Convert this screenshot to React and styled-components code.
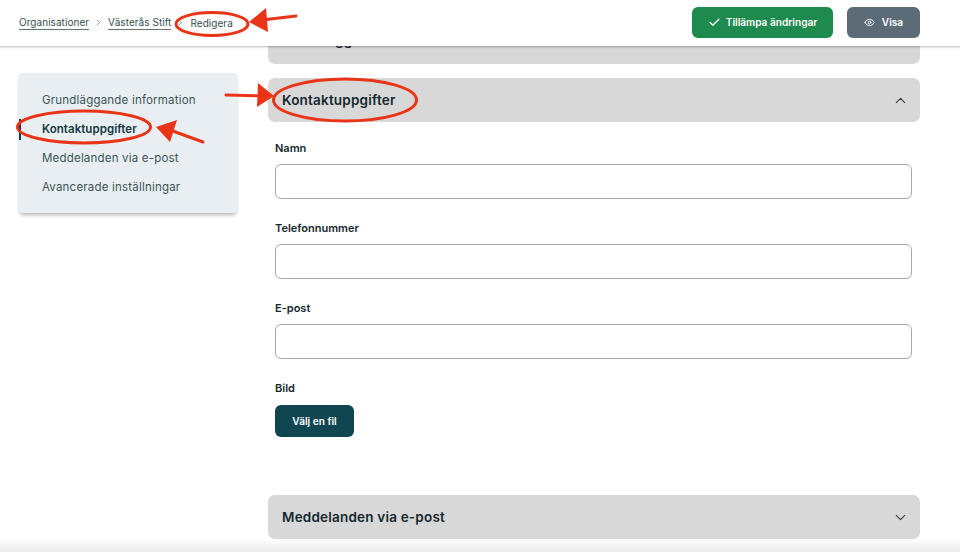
import React from 'react'
import styled, { createGlobalStyle } from 'styled-components'
import { Check, ChevronDown, ChevronRight, ChevronUp, Eye } from 'lucide-react'

const GlobalStyle = createGlobalStyle`
  html, body {
    margin: 0;
    background: #fff;
    font-family: Inter, "Open Sans", sans-serif;
  }
`

const Page = styled.div`
  position: relative;
  width: 960px;
  height: 552px;
  overflow: hidden;
  background: #fff;
`

const Header = styled.header`
  position: relative;
  z-index: 2;
  height: 46px;
  box-sizing: border-box;
  padding: 7px 40px 0 19px;
  display: flex;
  justify-content: space-between;
  align-items: flex-start;
  background: #fff;
  box-shadow: 0 1px 2px rgba(0, 0, 0, 0.3);
`

const Breadcrumbs = styled.nav`
  height: 31px;
  display: flex;
  align-items: center;
  gap: 5px;
  font-size: 10px;
  letter-spacing: 0.05px;
  color: #35504f;
`

const Crumb = styled.a`
  color: #35504f;
  text-decoration: none;
  border-bottom: 1px solid #5f7473;
  line-height: 13px;
`

const Actions = styled.div`
  display: flex;
  gap: 14px;
`

const ActionButton = styled.button`
  width: ${p => p.$width}px;
  height: 31px;
  padding: 0 0 1px;
  border: 0;
  border-radius: 6px;
  display: flex;
  align-items: center;
  justify-content: center;
  gap: ${p => p.$gap}px;
  font: 600 10.1px Inter, sans-serif;
  color: #fff;
  background: ${p => p.$color};
`

const Content = styled.div`
  display: grid;
  grid-template-columns: 218px 652px;
  column-gap: 31px;
  padding: 0 40px 0 19px;
`

const Sidebar = styled.aside`
  position: relative;
  margin-top: 27px;
  height: 140px;
  box-sizing: border-box;
  padding: 13px 0 0 23px;
  display: flex;
  flex-direction: column;
  background: #e9eef2;
  border-radius: 4px;
  box-shadow: 0 3px 4px -1px rgba(0, 0, 0, 0.3);
`

const SideItem = styled.a`
  position: relative;
  height: 29px;
  line-height: 29px;
  font-size: 11.5px;
  font-weight: ${p => (p.$active ? 600 : 400)};
  color: ${p => (p.$active ? '#123a40' : '#3a5556')};
  letter-spacing: ${p => (p.$active ? 0.05 : 0.2)}px;

  ${p => p.$active && `
    &::before {
      content: '';
      position: absolute;
      left: -23px;
      top: 4px;
      width: 2px;
      height: 21px;
      background: #123a40;
    }
  `}
`

const Main = styled.main`
  margin-top: -26px;
  display: flex;
  flex-direction: column;
`

const Bar = styled.div`
  height: 44px;
  margin-bottom: ${p => p.$mb || 0}px;
  box-sizing: border-box;
  padding: 0 11px 0 14px;
  display: flex;
  align-items: center;
  justify-content: space-between;
  background: #d8d8d8;
  border-radius: 7px;
`

const BarTitle = styled.h3`
  margin: ${p => (p.$peek ? '-5px 0 0' : '0')};
  font-size: 13.5px;
  font-weight: 600;
  letter-spacing: 0.2px;
  color: #14282e;
`

const Form = styled.form`
  height: 373px;
  box-sizing: border-box;
  padding: 19px 8px 0 7px;
  display: flex;
  flex-direction: column;
`

const Field = styled.div`
  height: 80px;
`

const Label = styled.label`
  display: block;
  height: 14px;
  line-height: 14px;
  margin-bottom: 9px;
  font-size: 11px;
  font-weight: 600;
  color: #14282e;
`

const Input = styled.input`
  display: block;
  width: 100%;
  height: 35px;
  box-sizing: border-box;
  border: 1px solid #a3a8a8;
  border-radius: 6px;
  background: #fff;
`

const FileButton = styled.button`
  display: block;
  width: 79px;
  height: 32px;
  margin-top: 10px;
  padding: 0;
  border: 0;
  border-radius: 6px;
  font: 600 10.1px Inter, sans-serif;
  color: #fff;
  background: #0f4650;
`

const BottomFade = styled.div`
  position: absolute;
  left: 0;
  right: 0;
  bottom: 0;
  height: 14px;
  background: linear-gradient(to bottom, rgba(235, 235, 235, 0), #ececec);
`

const Annotations = styled.svg`
  position: absolute;
  inset: 0;
  z-index: 3;
  pointer-events: none;
`

const red = '#ea3417'

const Mark = ({ cx, cy, rx, ry }) => (
  <ellipse cx={cx} cy={cy} rx={rx} ry={ry} fill="none" stroke={red} strokeWidth="3" />
)

const Arrow = ({ tail, tip, head }) => (
  <>
    <line x1={tail[0]} y1={tail[1]} x2={tip[0]} y2={tip[1]} stroke={red} strokeWidth="3" strokeLinecap="round" />
    <polygon points={head} fill={red} />
  </>
)

const App = () => {
  return (
    <Page>
      <GlobalStyle />
      <Header>
        <Breadcrumbs>
          <Crumb>Organisationer</Crumb>
          <ChevronRight size={9} color="#5f7473" />
          <Crumb>Västerås Stift</Crumb>
          <ChevronRight size={9} color="#5f7473" />
          <span>Redigera</span>
        </Breadcrumbs>
        <Actions>
          <ActionButton $width={141} $gap={5} $color="#1f8a4d">
            <Check size={13} strokeWidth={2.4} />
            Tillämpa ändringar
          </ActionButton>
          <ActionButton $width={73} $gap={7} $color="#5b6b78">
            <Eye size={11} />
            Visa
          </ActionButton>
        </Actions>
      </Header>
      <Content>
        <Sidebar>
          <SideItem>Grundläggande information</SideItem>
          <SideItem $active>Kontaktuppgifter</SideItem>
          <SideItem>Meddelanden via e-post</SideItem>
          <SideItem>Avancerade inställningar</SideItem>
        </Sidebar>
        <Main>
          <Bar $mb={14}>
            <BarTitle $peek>Grundläggande information</BarTitle>
            <ChevronUp size={17} strokeWidth={1.5} color="#2b3a42" />
          </Bar>
          <Bar>
            <BarTitle>Kontaktuppgifter</BarTitle>
            <ChevronUp size={17} strokeWidth={1.5} color="#2b3a42" />
          </Bar>
          <Form>
            <Field>
              <Label>Namn</Label>
              <Input />
            </Field>
            <Field>
              <Label>Telefonnummer</Label>
              <Input />
            </Field>
            <Field>
              <Label>E-post</Label>
              <Input />
            </Field>
            <div>
              <Label>Bild</Label>
              <FileButton type="button">Välj en fil</FileButton>
            </div>
          </Form>
          <Bar>
            <BarTitle>Meddelanden via e-post</BarTitle>
            <ChevronDown size={17} strokeWidth={1.5} color="#2b3a42" />
          </Bar>
        </Main>
      </Content>
      <BottomFade />
      <Annotations width="960" height="552" viewBox="0 0 960 552">
        <Mark cx={212} cy={24} rx={36} ry={11.5} />
        <Mark cx={84} cy={127} rx={66.5} ry={16} />
        <Mark cx={345} cy={100} rx={71.5} ry={21} />
        <Arrow tail={[296, 16]} tip={[262, 20]} head="249,22 266,8 268,32" />
        <Arrow tail={[226, 95]} tip={[262, 96]} head="274,96 258,83 257,107" />
        <Arrow tail={[203, 142]} tip={[170, 130]} head="156,127 177,120 170,142" />
      </Annotations>
    </Page>
  )
}

export default App
